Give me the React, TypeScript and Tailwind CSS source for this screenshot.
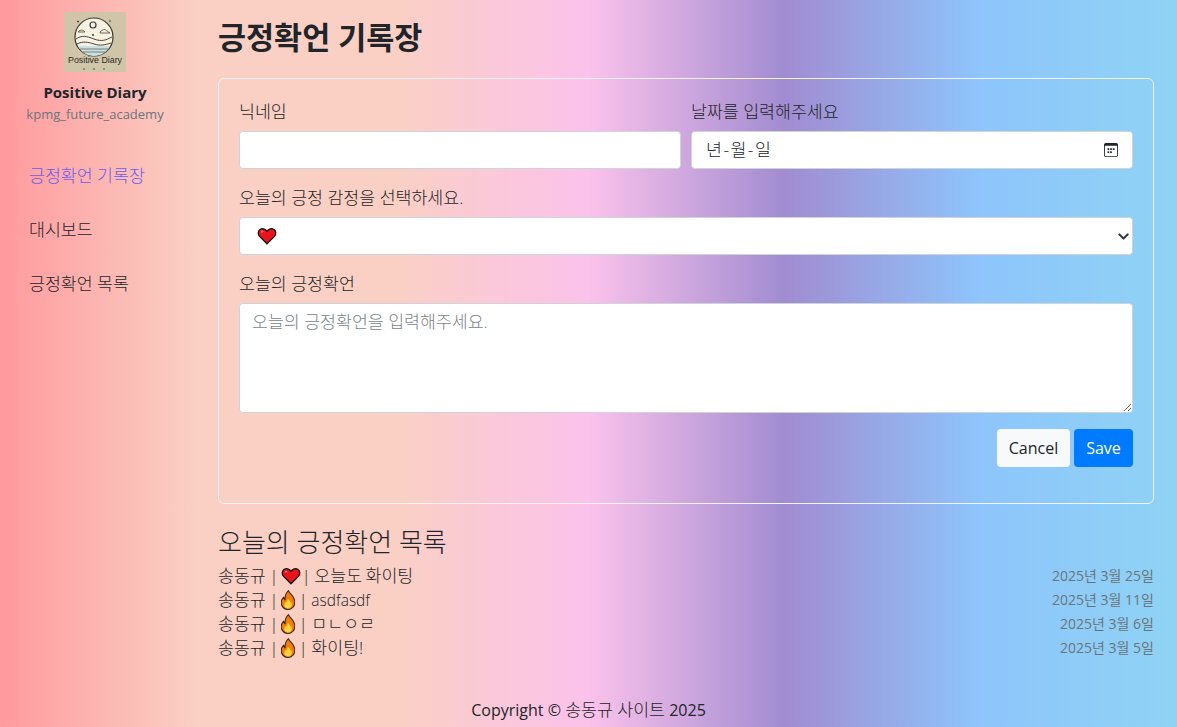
const font = '[font-family:"Open_Sans","Noto_Sans_CJK_KR",sans-serif]';
const ko = 'text-[17.3px] font-light text-[#212529]';

const Heart = ({ size = 20, className = '' }: { size?: number; className?: string }) => (
  <svg width={size} height={size} viewBox="0 0 20 20" className={`inline-block shrink-0 align-[-4px] ${className}`}>
    <path d="M10 17.800 2.600 10.400C.6 8.200.9 4.900 3 3.500c2.300-1.500 5.300-.8 7 1.900 1.700-2.700 4.700-3.400 7-1.900 2.100 1.400 2.400 4.700.4 6.900z" fill="#e8141c" stroke="#111" strokeWidth="1.300" strokeLinejoin="round" />
    <path d="M4.200 5.200c.9-.7 2-.6 2.600 0-.9.2-1.600.8-1.900 1.800-.6-.3-1.100-1.100-.7-1.800z" fill="#ff7a85" />
  </svg>
);

const Flame = ({ className = '' }: { className?: string }) => (
  <svg width="14" height="20" viewBox="3 0 14 20" className={`inline-block shrink-0 align-[-4px] ${className}`}>
    <path d="M10.500.6c.4 2.800 6.300 5.400 6.300 11.600 0 4.300-3.100 7.300-6.800 7.300s-6.800-3-6.800-6.900c0-2.400 1.100-4.200 2.500-5.500.1 1.300.6 2.100 1.400 2.600C6.900 6.500 8.100 2.700 10.500.6z" fill="#f57c00" stroke="#3a2a20" strokeWidth="1.100" strokeLinejoin="round" />
    <path d="M10.200 8.600c.3 1.900 3.600 3.200 3.600 6.100 0 2.200-1.700 3.800-3.800 3.800s-3.800-1.600-3.800-3.600c0-1.700 1.100-2.700 1.900-3.300.1.600.3 1.100.7 1.300C8.700 11.400 9 9.700 10.200 8.600z" fill="#ffd23f" />
  </svg>
);

const Logo = () => (
  <svg width="62" height="60" viewBox="0 0 62 60" className="block">
    <rect width="62" height="60" fill="#d0c5a9" />
    <circle cx="30" cy="25" r="19" fill="#f6f1e0" stroke="#3d3a33" strokeWidth="1.200" />
    <path d="M14 34h32c-3 6-9 10-16 10s-13-4-16-10z" fill="#c9dfe0" />
    <path d="M12 27c6-4 10-3 18 0s12 1 18-2M13 32c6-3 11-2 17 0s11 1 17-1" fill="none" stroke="#4a463c" strokeWidth="1" />
    <path d="M16 37h28M19 40h22" stroke="#5a5a50" strokeWidth=".7" />
    <circle cx="29" cy="13" r="3" fill="none" stroke="#3d3a33" strokeWidth="1.200" />
    <circle cx="29" cy="23" r="1" fill="#3d3a33" />
    <path d="M36 20c3-3 5-3 7-1l3 2H36zM14 20c3-3 5-2 7 0H14z" fill="none" stroke="#4a463c" strokeWidth=".8" />
    <path d="M13 9.500h2M14 8.500v2" stroke="#333" strokeWidth=".8" />
    <circle cx="46" cy="9" r="1.200" fill="#8a8472" />
    <text x="31" y="51" textAnchor="middle" fontSize="9" textLength="54" lengthAdjust="spacingAndGlyphs" fill="#2e2b24" fontFamily='"Liberation Sans",sans-serif'>Positive Diary</text>
    <path d="M19 57h2M29 57h2M39 57h2" stroke="#555" strokeWidth="1" />
  </svg>
);

const entries = [
  { mood: 'heart', text: '오늘도 화이팅', date: '2025년 3월 25일' },
  { mood: 'fire', text: 'asdfasdf', date: '2025년 3월 11일' },
  { mood: 'fire', text: 'ㅁㄴㅇㄹ', date: '2025년 3월 6일' },
  { mood: 'fire', text: '화이팅!', date: '2025년 3월 5일' },
];

const inputBox = 'h-[38px] w-full rounded-[4px] border border-[#ced4da] bg-white';
const label = `block h-[32px] pt-[1px] ${ko}`;

export default function App() {
  return (
    <div className={`${font} flex h-[727px] w-full overflow-hidden text-[16px] leading-[24px] text-[#212529] bg-[linear-gradient(to_right,#ff9a9e_0%,#fad0c4_16.67%,#fad0c4_33.33%,#fbc2eb_50%,#a18cd1_66.67%,#8ec5fc_83.33%,#8fd3f4_100%)]`}>
      <aside className="w-[196px] shrink-0 pl-[12px] pr-[18px] pt-[12px]">
        <div className="flex flex-col items-center">
          <Logo />
          <div className="mt-[8px] text-[15px] font-bold">Positive Diary</div>
          <div className="text-[13px] leading-[20px] text-[#6c757d]">kpmg_future_academy</div>
        </div>
        <nav className={`mt-[25px] flex flex-col ${ko}`}>
          <a className="px-[17px] py-[15px] text-[#6a5cf0]">긍정확언 기록장</a>
          <a className="px-[17px] py-[15px]">대시보드</a>
          <a className="px-[17px] py-[15px]">긍정확언 목록</a>
        </nav>
      </aside>

      <main className="flex min-w-0 flex-1 flex-col pl-[22px] pr-[23px]">
        <h1 className="mt-[16px] text-[30.500px] leading-[42px] font-bold">긍정확언 기록장</h1>

        <form className="mt-[20px] h-[426px] rounded-[6px] border border-[#f1f3f5] px-[20px] pt-[20px]">
          <div className="grid grid-cols-2 gap-[10px]">
            <div>
              <label className={label}>닉네임</label>
              <div className={inputBox} />
            </div>
            <div>
              <label className={label}>날짜를 입력해주세요</label>
              <div className={`${inputBox} flex items-center justify-between pl-[14px] pr-[14px]`}>
                <span className={`${ko} [word-spacing:-3px]`}>년 - 월 - 일</span>
                <svg width="14" height="14" viewBox="0 0 16 16" fill="#212529">
                  <path d="M14 0H2a2 2 0 0 0-2 2v12a2 2 0 0 0 2 2h12a2 2 0 0 0 2-2V2a2 2 0 0 0-2-2zM1 3.860a1 1 0 0 1 .5-.860h13a1 1 0 0 1 .5.860V14a1 1 0 0 1-1 1H2a1 1 0 0 1-1-1V3.860z" />
                  <rect x="4" y="6" width="2" height="2" />
                  <rect x="7" y="6" width="2" height="2" />
                  <rect x="10" y="6" width="2" height="2" />
                  <rect x="4" y="9.500" width="2" height="2" />
                  <rect x="7" y="9.500" width="2" height="2" />
                </svg>
              </div>
            </div>
          </div>

          <label className={`${label} mt-[16px]`}>오늘의 긍정 감정을 선택하세요.</label>
          <div className={`${inputBox} flex items-center justify-between pl-[17px] pr-[3px]`}>
            <Heart size={20} />
            <svg width="11" height="11" viewBox="0 0 16 16" fill="none" stroke="#343a40" strokeWidth="3" strokeLinecap="round" strokeLinejoin="round">
              <path d="m2 5 6 6 6-6" />
            </svg>
          </div>

          <label className={`${label} mt-[16px]`}>오늘의 긍정확언</label>
          <textarea
            className={`block h-[110px] w-full rounded-[4px] border border-[#ced4da] bg-white px-[12px] py-[6px] outline-none placeholder:text-[#7b838a] ${ko}`}
            placeholder="오늘의 긍정확언을 입력해주세요."
          />

          <div className="mt-[16px] flex justify-end gap-[4px]">
            <button type="button" className="h-[38px] w-[73px] rounded-[4px] bg-[#f8f9fa] text-[#212529]">Cancel</button>
            <button type="button" className="h-[38px] w-[59px] rounded-[4px] bg-[#007bff] text-white">Save</button>
          </div>
        </form>

        <h2 className="mt-[20px] text-[26px] leading-[36px] font-light">오늘의 긍정확언 목록</h2>
        <ul className="mt-[4px]">
          {entries.map((item) => (
            <li key={item.date} className="flex h-[24px] items-center justify-between">
              <span className={`${ko} whitespace-pre [word-spacing:-1px]`}>
                송동규 | {item.mood === 'heart' ? <Heart className="-ml-[1px] -mr-[3px]" /> : <Flame className="-ml-[1px]" />} | {item.text === 'asdfasdf' ? <span className="text-[15.500px]">{item.text}</span> : item.text}
              </span>
              <span className="text-[14px] text-[#6c757d]">{item.date}</span>
            </li>
          ))}
        </ul>

        <footer className="mt-[38px] -ml-[218px] w-[1177px] text-center">
          Copyright © <span className={ko}>송동규 사이트</span> 2025
        </footer>
      </main>
    </div>
  );
}
